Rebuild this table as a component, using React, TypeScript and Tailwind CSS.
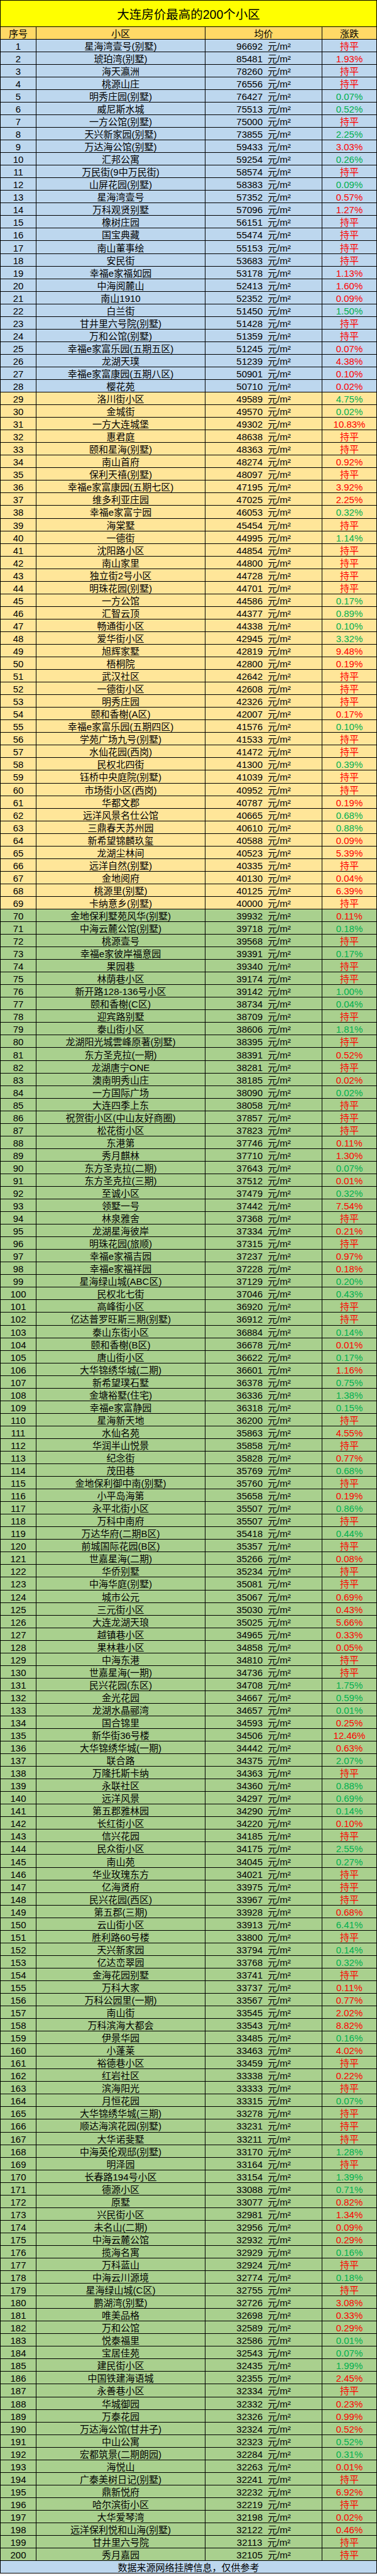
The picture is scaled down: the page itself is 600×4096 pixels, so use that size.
const ROWS: [string, number, string][] = [
  ["星海湾壹号(别墅)", 96692, ""],
  ["琥珀湾(别墅)", 85481, "1.93"],
  ["海天瀛洲", 78260, ""],
  ["桃源山庄", 76556, ""],
  ["明秀庄园(别墅)", 76427, "-0.07"],
  ["威尼斯水城", 75513, "-0.52"],
  ["一方公馆(别墅)", 75000, ""],
  ["天兴新家园(别墅)", 73855, "-2.25"],
  ["万达海公馆(别墅)", 59433, "3.03"],
  ["汇邦公寓", 59254, "-0.26"],
  ["万民街(9中万民街)", 58574, ""],
  ["山屏花园(别墅)", 58383, "-0.09"],
  ["星海湾壹号", 57352, "0.57"],
  ["万科观贤别墅", 57096, "1.27"],
  ["橡树庄园", 56151, ""],
  ["国宝典藏", 55474, ""],
  ["南山董事绘", 55153, ""],
  ["安民街", 53683, ""],
  ["幸福e家福如园", 53178, "1.13"],
  ["中海阅麓山", 52413, "1.60"],
  ["南山1910", 52352, "0.09"],
  ["白兰街", 51450, "-1.50"],
  ["甘井里六号院(别墅)", 51428, ""],
  ["万和公馆(别墅)", 51359, ""],
  ["幸福e家富乐园(五期五区)", 51245, "0.07"],
  ["龙湖天璞", 51239, "4.38"],
  ["幸福e家富康园(五期八区)", 50901, "0.10"],
  ["樱花苑", 50710, "0.02"],
  ["洛川街小区", 49589, "-4.75"],
  ["金城街", 49570, "-0.02"],
  ["一方大连城堡", 49302, "10.83"],
  ["惠君庭", 48638, ""],
  ["颐和星海(别墅)", 48363, ""],
  ["南山首府", 48274, "0.92"],
  ["保利天禧(别墅)", 48097, ""],
  ["幸福e家富康园(五期七区)", 47195, "3.92"],
  ["维多利亚庄园", 47025, "2.25"],
  ["幸福e家富宁园", 46053, "-0.32"],
  ["海棠墅", 45454, ""],
  ["一德街", 44995, "-1.14"],
  ["沈阳路小区", 44854, ""],
  ["南山家里", 44800, ""],
  ["独立街2号小区", 44728, ""],
  ["明珠花园(别墅)", 44701, ""],
  ["一方公馆", 44586, "-0.17"],
  ["汇智云顶", 44377, "-0.89"],
  ["畅通街小区", 44338, "-0.10"],
  ["爱华街小区", 42945, "-3.32"],
  ["旭辉家墅", 42819, "9.48"],
  ["梧桐院", 42800, "0.19"],
  ["武汉社区", 42642, ""],
  ["一德街小区", 42608, ""],
  ["明秀庄园", 42326, ""],
  ["颐和香榭(A区)", 42007, "0.17"],
  ["幸福e家富乐园(五期四区)", 41576, "-0.10"],
  ["学苑广场九号(别墅)", 41533, ""],
  ["水仙花园(西岗)", 41472, ""],
  ["民权北四街", 41300, "-0.39"],
  ["钰桥中央庭院(别墅)", 41039, ""],
  ["市场街小区(西岗)", 40952, ""],
  ["华都文郡", 40787, "0.19"],
  ["远洋风景名仕公馆", 40665, "-0.68"],
  ["三鼎春天苏州园", 40610, "-0.88"],
  ["新希望锦麟玖玺", 40588, "0.09"],
  ["龙湖尘林间", 40523, "5.39"],
  ["远洋自然(别墅)", 40335, ""],
  ["金地阅府", 40130, "0.04"],
  ["桃源里(别墅)", 40125, "6.39"],
  ["卡纳意乡(别墅)", 40000, ""],
  ["金地保利墅苑风华(别墅)", 39932, "0.11"],
  ["中海云麓公馆(别墅)", 39718, "-0.18"],
  ["桃源壹号", 39568, ""],
  ["幸福e家彼岸福意园", 39391, "-0.17"],
  ["果园巷", 39340, ""],
  ["林荫巷小区", 39174, ""],
  ["新开路128-136号小区", 39142, "-1.00"],
  ["颐和香榭(C区)", 38734, "-0.04"],
  ["迎宾路别墅", 38709, ""],
  ["泰山街小区", 38606, "-1.81"],
  ["龙湖阳光城雲峰原著(别墅)", 38395, ""],
  ["东方圣克拉(一期)", 38391, "0.52"],
  ["龙湖唐宁ONE", 38281, ""],
  ["澳南明秀山庄", 38185, "0.02"],
  ["一方国际广场", 38090, "-0.02"],
  ["大连四季上东", 38058, ""],
  ["祝贺街小区(中山友好商圈)", 37857, ""],
  ["松花街小区", 37823, ""],
  ["东港第", 37746, "0.11"],
  ["秀月麒林", 37710, "1.30"],
  ["东方圣克拉(二期)", 37643, "-0.07"],
  ["东方圣克拉(三期)", 37512, "0.01"],
  ["至诚小区", 37479, "-0.32"],
  ["领墅一号", 37442, "7.54"],
  ["林泉雅舍", 37368, ""],
  ["龙湖星海彼岸", 37334, "0.21"],
  ["明珠花园(旅顺)", 37315, ""],
  ["幸福e家福吉园", 37237, "0.97"],
  ["幸福e家福祥园", 37228, "0.18"],
  ["星海绿山城(ABC区)", 37129, "-0.20"],
  ["民权北七街", 37046, "-0.43"],
  ["高峰街小区", 36920, ""],
  ["亿达普罗旺斯三期(别墅)", 36912, ""],
  ["泰山东街小区", 36884, "-0.14"],
  ["颐和香榭(B区)", 36678, "0.01"],
  ["唐山街小区", 36622, "-0.17"],
  ["大华锦绣华城(二期)", 36601, "1.16"],
  ["新希望璞石墅", 36378, "-0.75"],
  ["金塘裕墅(住宅)", 36336, "-1.38"],
  ["幸福e家富静园", 36318, "-0.15"],
  ["星海新天地", 36200, ""],
  ["水仙名苑", 35863, "4.55"],
  ["华润半山悦景", 35858, ""],
  ["纪念街", 35828, "0.77"],
  ["茂田巷", 35769, "-0.68"],
  ["金地保利御中南(别墅)", 35760, ""],
  ["小平岛海第", 35658, "0.19"],
  ["永平北街小区", 35507, "-0.86"],
  ["万科中南府", 35507, ""],
  ["万达华府(二期B区)", 35418, "-0.44"],
  ["前城国际花园(B区)", 35357, ""],
  ["世嘉星海(二期)", 35266, "0.08"],
  ["华侨别墅", 35234, ""],
  ["中海华庭(别墅)", 35081, ""],
  ["城市公元", 35067, "0.69"],
  ["三元街小区", 35030, "0.43"],
  ["大连龙湖天琅", 35025, "5.66"],
  ["越镇巷小区", 34965, "0.33"],
  ["果林巷小区", 34858, "0.05"],
  ["中海东港", 34810, ""],
  ["世嘉星海(一期)", 34736, ""],
  ["民兴花园(东区)", 34708, "-1.75"],
  ["金光花园", 34667, "-0.59"],
  ["龙湖水晶郦湾", 34657, "-0.01"],
  ["国合锦里", 34593, "0.25"],
  ["新华街36号楼", 34506, "12.46"],
  ["大华锦绣华城(一期)", 34442, "0.63"],
  ["联合路", 34375, "-2.07"],
  ["万隆托斯卡纳", 34363, ""],
  ["永联社区", 34360, "-0.88"],
  ["远洋风景", 34297, "-0.69"],
  ["第五郡雅林园", 34290, "-0.14"],
  ["长红街小区", 34220, "0.10"],
  ["信兴花园", 34185, ""],
  ["民众街小区", 34175, "-2.55"],
  ["南山苑", 34045, "-0.27"],
  ["华业玫瑰东方", 34021, ""],
  ["亿海贤府", 33975, ""],
  ["民兴花园(西区)", 33967, ""],
  ["第五郡(三期)", 33928, "0.68"],
  ["云山街小区", 33913, "-6.41"],
  ["胜利路60号楼", 33800, ""],
  ["天兴新家园", 33794, "-0.14"],
  ["亿达峦翠园", 33768, "-0.32"],
  ["金海花园别墅", 33741, ""],
  ["万科大家", 33737, "0.11"],
  ["万科公园里(一期)", 33567, "0.77"],
  ["南山街", 33545, "2.02"],
  ["万科滨海大都会", 33543, "8.82"],
  ["伊景华园", 33485, "-0.16"],
  ["小蓬莱", 33463, "4.02"],
  ["裕德巷小区", 33459, ""],
  ["红岩社区", 33338, "0.22"],
  ["滨海阳光", 33333, ""],
  ["月恒花园", 33315, "-0.07"],
  ["大华锦绣华城(三期)", 33278, ""],
  ["顺达海滨花园(别墅)", 33231, ""],
  ["大华诺斐墅", 33211, ""],
  ["中海英伦观邸(别墅)", 33170, "-1.28"],
  ["明泽园", 33164, ""],
  ["长春路194号小区", 33154, "-1.39"],
  ["德源小区", 33088, "-0.71"],
  ["原墅", 33077, "0.82"],
  ["兴民街小区", 32981, "1.34"],
  ["未名山(二期)", 32956, "0.09"],
  ["中海云麓公馆", 32932, "0.29"],
  ["揽海名寓", 32929, "-0.16"],
  ["万科蓝山", 32924, ""],
  ["中海云川源境", 32774, "-0.18"],
  ["星海绿山城(C区)", 32755, ""],
  ["鹏湖湾(别墅)", 32726, "3.08"],
  ["唯美品格", 32698, "0.33"],
  ["万和公馆", 32589, "0.29"],
  ["悦泰福里", 32586, "-0.01"],
  ["宝居佳苑", 32543, "-0.07"],
  ["建民街小区", 32435, "-1.99"],
  ["中国铁建海语城", 32355, "2.45"],
  ["永善巷小区", 32334, ""],
  ["华城御园", 32332, "0.23"],
  ["万泰花园", 32326, "0.99"],
  ["万达海公馆(甘井子)", 32324, "0.52"],
  ["中山公寓", 32323, "-0.52"],
  ["宏都筑景(二期朗园)", 32284, "-0.31"],
  ["海悦山", 32263, "0.01"],
  ["广泰美树日记(别墅)", 32241, ""],
  ["鼎新悦府", 32232, "6.92"],
  ["哈尔滨街小区", 32219, ""],
  ["大华爱琴湾", 32198, "0.02"],
  ["远洋保利悦和山海(别墅)", 32122, "0.46"],
  ["甘井里六号院", 32113, ""],
  ["秀月嘉园", 32105, ""],
];

const COLS = "grid grid-cols-[57px_269px_186px_1fr] h-[20.05px]";
const CELL = "flex items-center justify-center border-r border-b border-black pt-[2px] leading-none";

// price band colours: >=50000 blue, >=40000 yellow, rest green
function rowBg(i: number) {
  if (i < 28) return "bg-[#bdd7ee]";
  if (i < 69) return "bg-[#ffe699]";
  return "bg-[#a9d08e]";
}

function Change({ value }: { value: string }) {
  if (!value) return <span className="text-[#ff0000]">持平</span>;
  const down = value.startsWith("-");
  return (
    <span className={down ? "text-[#00b050]" : "text-[#ff0000]"}>
      {down ? value.slice(1) : value}%
    </span>
  );
}

export default function App() {
  return (
    <div className="w-[600px] bg-white font-['Liberation_Sans','Noto_Sans_CJK_SC',sans-serif] text-[15px] text-black">
      <div className="border-l border-t border-black">
        <div className="flex h-[41.7px] items-center justify-center border-r border-b border-black bg-[#ffff00] pt-[5px] text-[19.5px] leading-none">
          大连房价最高的200个小区
        </div>
        <div className={`${COLS} bg-[#ffd966]`}>
          <div className={CELL}>序号</div>
          <div className={CELL}>小区</div>
          <div className={CELL}>均价</div>
          <div className={CELL}>涨跌</div>
        </div>
        {ROWS.map(([name, price, change], i) => (
          <div key={i} className={`${COLS} ${rowBg(i)}`}>
            <div className={CELL}>{i + 1}</div>
            <div className={CELL}>{name}</div>
            <div className={CELL}>
              {price}
              <span className="ml-[8px]">元/m²</span>
            </div>
            <div className={CELL}>
              <Change value={change} />
            </div>
          </div>
        ))}
        <div className="flex h-[20.05px] items-center justify-center border-r border-b border-black bg-[#bdd7ee] pt-[2px] leading-none">
          数据来源网络挂牌信息，仅供参考
        </div>
      </div>
    </div>
  );
}
